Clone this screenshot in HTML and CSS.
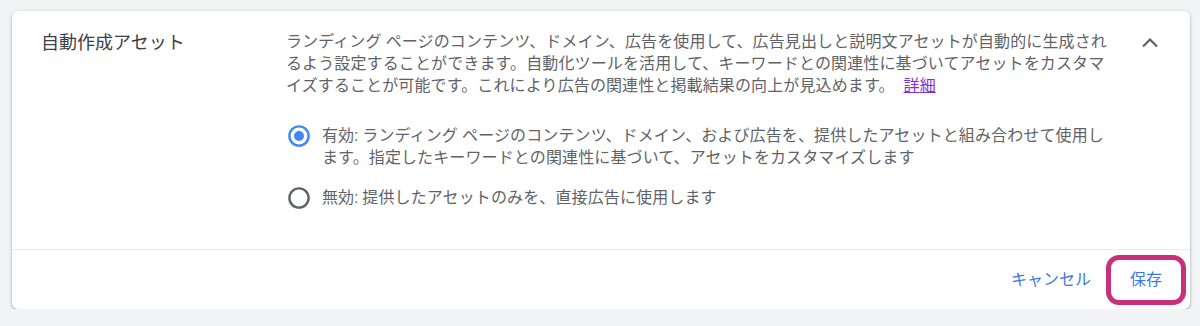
FILE: index.html
```html
<!DOCTYPE html>
<html lang="ja">
<head>
    <meta charset="UTF-8">
    <meta name="viewport" content="width=device-width, initial-scale=1.0">
    <title>自動作成アセット</title>
    <link rel="stylesheet" href="styles.css">
</head>
<body>
    <div class="card">
        <div class="card-body">
            <div class="setting-title">自動作成アセット</div>

            <div class="setting-content">
                <p class="description">
                    ランディング ページのコンテンツ、ドメイン、広告を使用して、広告見出しと説明文アセットが自動的に生成されるよう設定することができます。自動化ツールを活用して、キーワードとの関連性に基づいてアセットをカスタマイズすることが可能です。これにより広告の関連性と掲載結果の向上が見込めます。<a href="#" class="link">詳細</a>
                </p>

                <div class="options">
                    <label class="option">
                        <svg class="radio" width="24" height="24" viewBox="0 0 24 24">
                            <circle cx="12" cy="12" r="9.6" fill="none" stroke="#4285f4" stroke-width="2.4"/>
                            <circle cx="12" cy="12" r="5" fill="#4285f4"/>
                        </svg>
                        <span class="option-text">有効: ランディング ページのコンテンツ、ドメイン、および広告を、提供したアセットと組み合わせて使用します。指定したキーワードとの関連性に基づいて、アセットをカスタマイズします</span>
                    </label>
                    <label class="option">
                        <svg class="radio" width="24" height="24" viewBox="0 0 24 24">
                            <circle cx="12" cy="12" r="9.6" fill="none" stroke="#5f6368" stroke-width="2.4"/>
                        </svg>
                        <span class="option-text">無効: 提供したアセットのみを、直接広告に使用します</span>
                    </label>
                </div>
            </div>

            <div class="collapse">
                <svg width="24" height="24" viewBox="0 0 24 24">
                    <path d="M5 15.5L12 8.5L19 15.5" fill="none" stroke="#5f6368" stroke-width="2.2"/>
                </svg>
            </div>
        </div>

        <div class="card-footer">
            <button class="btn">キャンセル</button>
            <button class="btn btn-save">保存</button>
        </div>
    </div>
</body>
</html>
```

FILE: styles.css
```css
* { margin: 0; padding: 0; box-sizing: border-box; }
body {
    font-family: Roboto, 'Noto Sans CJK JP', sans-serif;
    background: #f1f3f4;
    padding: 11px 10px 0 12px;
    color: #5f6368;
}
.card {
    background: white;
    border-radius: 6px;
    box-shadow: 0 1px 2px rgba(60,64,67,0.3), 0 1px 3px 1px rgba(60,64,67,0.15);
}
.card-body {
    display: flex;
    padding: 20px 28px 39px 29px;
    border-bottom: 1px solid #e8eaed;
}
.setting-title {
    width: 245px;
    flex-shrink: 0;
    font-size: 18px;
    line-height: 24px;
    color: #3c4043;
}
.setting-content {
    width: 830px;
    flex-shrink: 0;
    font-size: 16px;
    letter-spacing: 0.12px;
}
.description {
    line-height: 22px;
}
.link {
    color: #8430ce;
    margin-left: 9px;
}
.options {
    margin-top: 28px;
    display: flex;
    flex-direction: column;
    gap: 18px;
}
.option {
    display: flex;
    align-items: flex-start;
    gap: 11px;
    line-height: 22px;
}
.radio {
    flex-shrink: 0;
    margin-left: 1px;
    margin-top: -1px;
}
.option-text {
    width: 796px;
}
.collapse {
    margin-left: auto;
    height: 24px;
}
.card-footer {
    display: flex;
    justify-content: flex-end;
    align-items: center;
    gap: 7px;
    height: 59px;
    padding-right: 4px;
}
.btn {
    font-family: Roboto, 'Noto Sans CJK JP', sans-serif;
    font-size: 16px;
    color: #3b78e7;
    background: none;
    border: none;
    padding: 0 8px;
    line-height: 36px;
    cursor: pointer;
}
.btn-save {
    border: 5px solid #c8307a;
    border-radius: 13px;
    padding: 0 19px;
    line-height: 40px;
    background: white;
}
```
